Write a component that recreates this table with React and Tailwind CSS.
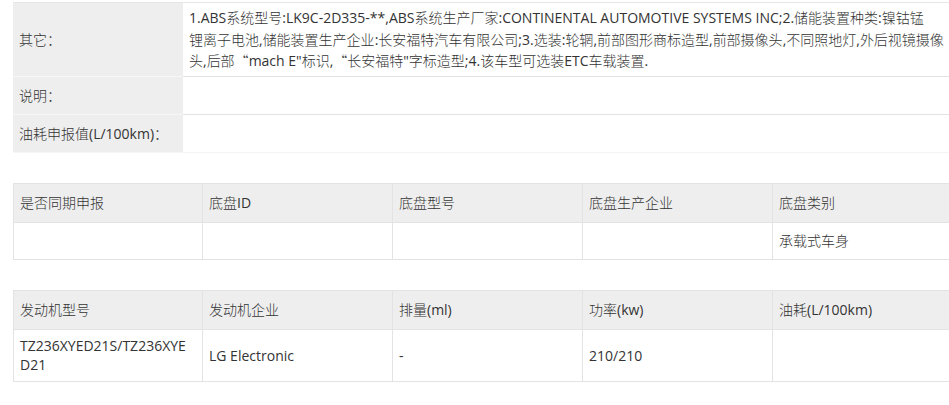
import React from "react";

const font = { fontFamily: '"Open Sans", "Noto Sans CJK SC", sans-serif' };
const cjkFont = { fontFamily: '"Noto Sans CJK SC", sans-serif' };

function T({ s }) {
  const parts = s.split(/([\u3000-\u9fff\uff00-\uffef“]+)/);
  return (
    <>
      {parts.map((p, i) =>
        p === "" ? null : /[\u3000-\u9fff\uff00-\uffef“]/.test(p) ? (
          <span key={i} className="font-light" style={cjkFont}>{p}</span>
        ) : (
          <span key={i} className="font-normal">{p}</span>
        )
      )}
    </>
  );
}

function Grid5({ header, row, rowH }) {
  return (
    <div className="w-[950px] border-t border-l border-[#e3e3e3]">
      <div className="grid grid-cols-[189px_190px_190px_190px_191px] bg-[#eeeeee] border-b border-[#e3e3e3]">
        {header.map((h, i) => (
          <div key={i} className="h-[38px] flex items-center px-[6px] border-r border-[#e3e3e3]">
            <span><T s={h} /></span>
          </div>
        ))}
      </div>
      <div className="grid grid-cols-[189px_190px_190px_190px_191px] bg-white border-b border-[#e3e3e3]">
        {row.map((c, i) => (
          <div key={i} className={`${rowH} flex items-center px-[6px] border-r border-[#e3e3e3] leading-[19px]`}>
            <span>
              {c.split("\n").map((ln, j) => (
                <span key={j} className="block"><T s={ln} /></span>
              ))}
            </span>
          </div>
        ))}
      </div>
    </div>
  );
}

const lines = [
  "1.ABS系统型号:LK9C-2D335-**,ABS系统生产厂家:CONTINENTAL AUTOMOTIVE SYSTEMS INC;2.储能装置种类:镍钴锰",
  "锂离子电池,储能装置生产企业:长安福特汽车有限公司;3.选装:轮辋,前部图形商标造型,前部摄像头,不同照地灯,外后视镜摄像",
  "头,后部“mach E\"标识,“长安福特\"字标造型;4.该车型可选装ETC车载装置.",
];

export default function App() {
  return (
    <div className="w-[949px] h-[405px] overflow-hidden bg-white text-[14px] text-[#333333]" style={font}>
      <div className="ml-[13px] mt-[2px] w-[950px] border-t border-[#e6e6e6]">
        <div className="grid grid-cols-[170px_1fr]">
          <div className="bg-[#eeeeee] flex items-center px-[6px] border-b border-[#f6f6f6]">
            <span><T s="其它：" /></span>
          </div>
          <div className="px-[6px] py-[4px] leading-[21.5px] whitespace-nowrap border-b border-[#e3e3e3]">
            {lines.map((l, i) => (
              <div key={i}><T s={l} /></div>
            ))}
          </div>
        </div>
        <div className="grid grid-cols-[170px_1fr] h-[38px]">
          <div className="bg-[#eeeeee] flex items-center px-[6px] border-b border-[#f6f6f6]">
            <span><T s="说明：" /></span>
          </div>
          <div className="border-b border-[#e3e3e3]"></div>
        </div>
        <div className="grid grid-cols-[170px_1fr] h-[38px]">
          <div className="bg-[#eeeeee] flex items-center px-[6px] border-b border-[#f6f6f6]">
            <span><T s="油耗申报值(L/100km)：" /></span>
          </div>
          <div className="border-b border-[#f4f4f4]"></div>
        </div>
      </div>

      <div className="ml-[13px] mt-[30px]">
        <Grid5
          header={["是否同期申报", "底盘ID", "底盘型号", "底盘生产企业", "底盘类别"]}
          row={["", "", "", "", "承载式车身"]}
          rowH="h-[36px]"
        />
      </div>

      <div className="ml-[13px] mt-[30px]">
        <Grid5
          header={["发动机型号", "发动机企业", "排量(ml)", "功率(kw)", "油耗(L/100km)"]}
          row={["TZ236XYED21S/TZ236XYE\nD21", "LG Electronic", "-", "210/210", ""]}
          rowH="h-[51px]"
        />
      </div>
    </div>
  );
}
